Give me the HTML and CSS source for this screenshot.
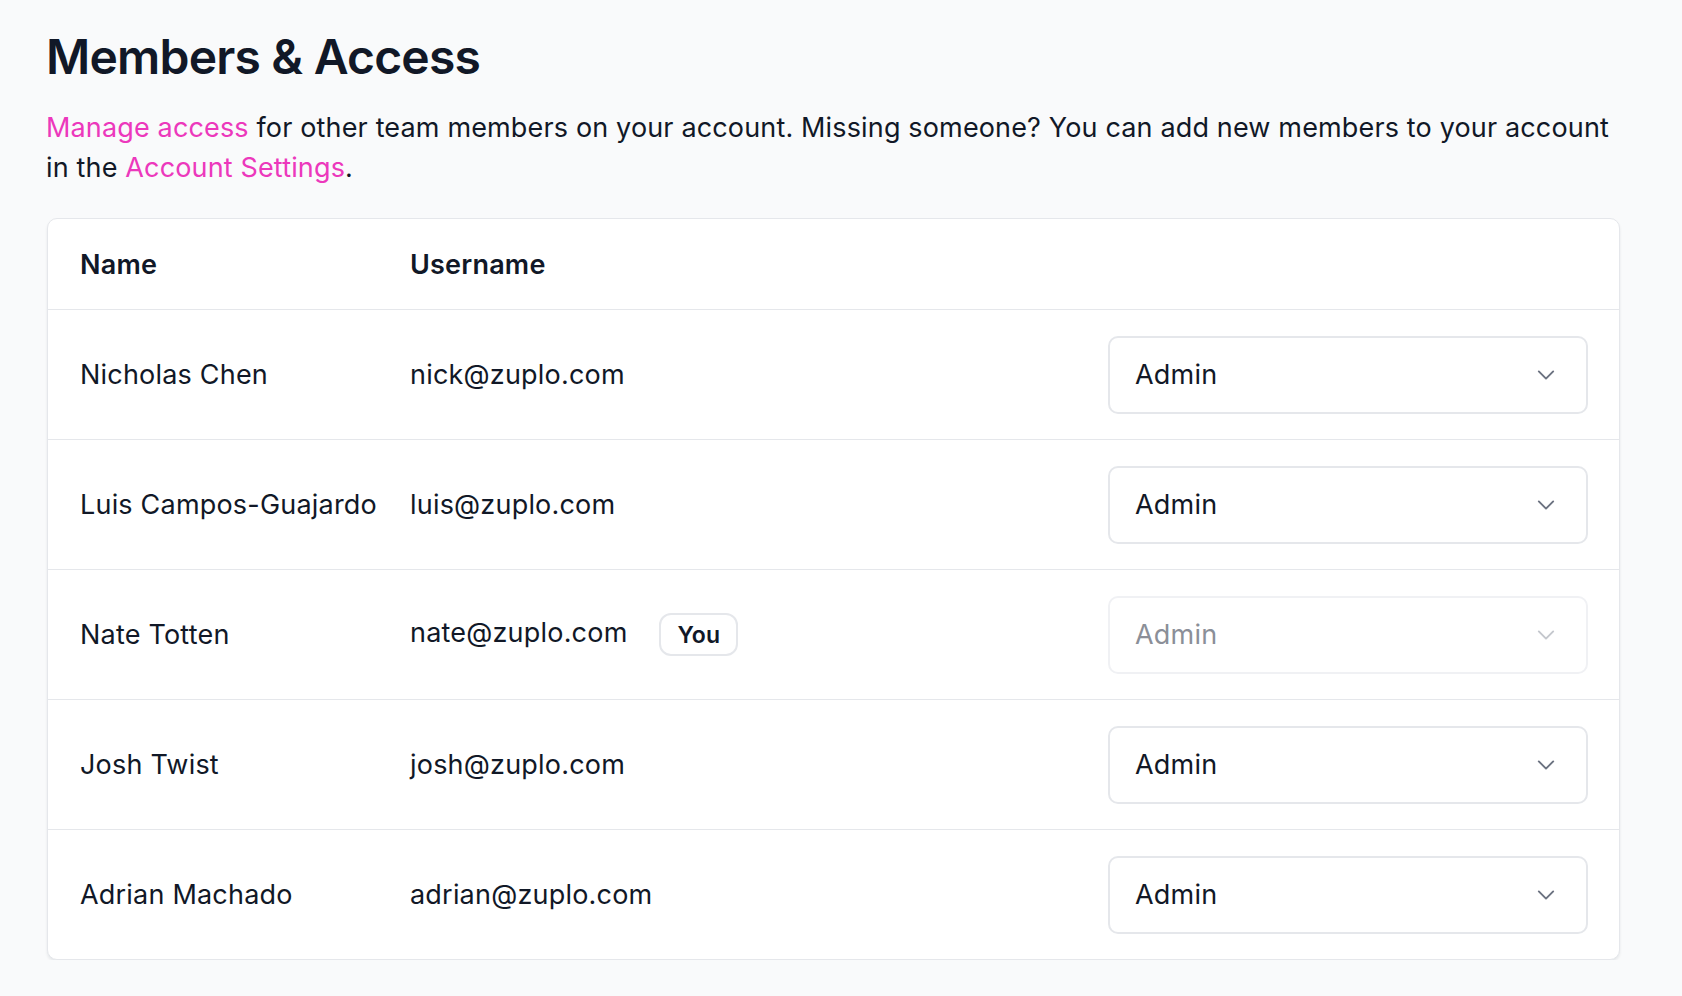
FILE: index.html
```html
<!DOCTYPE html>
<html lang="en">
<head>
<meta charset="utf-8">
<title>Members &amp; Access</title>
<link rel="stylesheet" href="styles.css">
</head>
<body>
<main class="page">
  <h1 class="title">Members &amp; Access</h1>
  <p class="intro"><a class="link" href="#">Manage access</a> for other team members on your account. Missing someone? You can add new members to your account in the <a class="link" href="#">Account Settings</a>.</p>

  <section class="card">
    <div class="row head">
      <div class="cell">Name</div>
      <div class="cell">Username</div>
      <div class="cell"></div>
    </div>

    <div class="row">
      <div class="cell">Nicholas Chen</div>
      <div class="cell">nick@zuplo.com</div>
      <div class="cell"><div class="select"><span>Admin</span><svg class="chev" viewBox="0 0 20 20"><path d="M4 7l6 6 6-6"/></svg></div></div>
    </div>

    <div class="row">
      <div class="cell">Luis Campos-Guajardo</div>
      <div class="cell">luis@zuplo.com</div>
      <div class="cell"><div class="select"><span>Admin</span><svg class="chev" viewBox="0 0 20 20"><path d="M4 7l6 6 6-6"/></svg></div></div>
    </div>

    <div class="row">
      <div class="cell">Nate Totten</div>
      <div class="cell user"><span class="email">nate@zuplo.com</span><span class="badge">You</span></div>
      <div class="cell"><div class="select disabled"><span>Admin</span><svg class="chev" viewBox="0 0 20 20"><path d="M4 7l6 6 6-6"/></svg></div></div>
    </div>

    <div class="row">
      <div class="cell">Josh Twist</div>
      <div class="cell">josh@zuplo.com</div>
      <div class="cell"><div class="select"><span>Admin</span><svg class="chev" viewBox="0 0 20 20"><path d="M4 7l6 6 6-6"/></svg></div></div>
    </div>

    <div class="row">
      <div class="cell">Adrian Machado</div>
      <div class="cell">adrian@zuplo.com</div>
      <div class="cell"><div class="select"><span>Admin</span><svg class="chev" viewBox="0 0 20 20"><path d="M4 7l6 6 6-6"/></svg></div></div>
    </div>
  </section>
</main>
</body>
</html>
```

FILE: styles.css
```css
* { box-sizing: border-box; }
html, body { margin: 0; padding: 0; }
body {
  background: #f9fafb;
  color: #111827;
  font-family: Inter, "Noto Sans", sans-serif;
}
.page {
  padding: 28px 62px 0 46px;
}
.title {
  margin: 0;
  font-size: 48px;
  line-height: 58px;
  font-weight: 600;
  letter-spacing: -0.8px;
}
.intro {
  margin: 22px 0 0;
  font-size: 27px;
  line-height: 40px;
  letter-spacing: 0.15px;
}
.link {
  color: #ec38bc;
  text-decoration: none;
}
.card {
  margin: 30px 0 0 1px;
  background: #fff;
  border: 1px solid #e5e7eb;
  border-radius: 10px;
  box-shadow: 0 2px 3px rgba(17, 24, 39, 0.08);
}
.row {
  display: grid;
  grid-template-columns: 330px 1fr 480px;
  align-items: center;
  padding: 0 31px 0 32px;
  height: 130px;
  border-top: 1px solid #e5e7eb;
  font-size: 27px;
  letter-spacing: 0.2px;
}
.row.head {
  border-top: none;
  height: 90px;
  font-weight: 600;
}
.user {
  display: flex;
  align-items: center;
  gap: 32px;
}
.email { position: relative; top: -2px; }
.badge {
  display: inline-flex;
  align-items: center;
  justify-content: center;
  height: 43px;
  padding: 0 16px;
  border: 2px solid #e5e7eb;
  border-radius: 12px;
  font-size: 23px;
  font-weight: 600;
}
.select {
  display: flex;
  align-items: center;
  justify-content: space-between;
  height: 78px;
  padding: 0 28px 0 25px;
  border: 2px solid #e5e7eb;
  border-radius: 10px;
  background: #fff;
}
.chev {
  width: 24px;
  height: 24px;
  fill: none;
  stroke: #6b7280;
  stroke-width: 1.6;
  stroke-linecap: round;
  stroke-linejoin: round;
}
.select.disabled {
  border-color: #f0f1f4;
  color: #8b8f98;
}
.select.disabled .chev { stroke: #c4c7cd; }
```
